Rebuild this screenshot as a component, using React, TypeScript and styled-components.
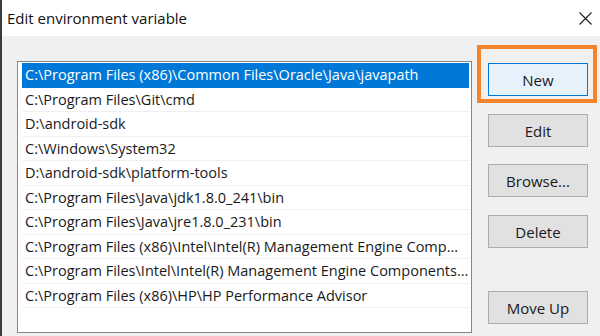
import styled, { createGlobalStyle } from "styled-components";

const GlobalStyle = createGlobalStyle`
  html, body {
    margin: 0;
    padding: 0;
    width: 600px;
    height: 336px;
    overflow: hidden;
    background: #f0f0f0;
  }
  body {
    font-family: "Open Sans", "Noto Sans", sans-serif;
  }
`;

const paths = [
  "C:\\Program Files (x86)\\Common Files\\Oracle\\Java\\javapath",
  "C:\\Program Files\\Git\\cmd",
  "D:\\android-sdk",
  "C:\\Windows\\System32",
  "D:\\android-sdk\\platform-tools",
  "C:\\Program Files\\Java\\jdk1.8.0_241\\bin",
  "C:\\Program Files\\Java\\jre1.8.0_231\\bin",
  "C:\\Program Files (x86)\\Intel\\Intel(R) Management Engine Comp...",
  "C:\\Program Files\\Intel\\Intel(R) Management Engine Components...",
  "C:\\Program Files (x86)\\HP\\HP Performance Advisor",
];

function App() {
  return (
    <>
      <GlobalStyle />
      <Window>
        <TitleBar>
          <Title>Edit environment variable</Title>
          <CloseButton>
            <svg width="13" height="13" viewBox="0 0 13 13">
              <path d="M0.5 0.5 L12.5 12.5 M12.5 0.5 L0.5 12.5" stroke="#222" strokeWidth="1.2" />
            </svg>
          </CloseButton>
        </TitleBar>
        <Body>
          <PathList>
            {paths.map((p, i) => (
              <PathRow key={p} selected={i === 0}>
                <span>{p}</span>
              </PathRow>
            ))}
          </PathList>
          <ButtonColumn>
            <Highlight>
              <ActionButton primary>New</ActionButton>
            </Highlight>
            <ActionButton gap={18}>Edit</ActionButton>
            <ActionButton gap={17}>Browse...</ActionButton>
            <ActionButton gap={18}>Delete</ActionButton>
            <ActionButton gap={43}>Move Up</ActionButton>
          </ButtonColumn>
        </Body>
      </Window>
    </>
  );
}

const Window = styled.div`
  width: 600px;
  height: 336px;
  box-sizing: border-box;
  border-left: 2px solid #3c3c3c;
  background: #f0f0f0;
  display: flex;
  flex-direction: column;
`;

const TitleBar = styled.div`
  height: 36px;
  flex-shrink: 0;
  background: #ffffff;
  display: flex;
  align-items: center;
  justify-content: space-between;
  padding: 0 3px 0 5px;
`;

const Title = styled.div`
  font-size: 15px;
  color: #111;
`;

const CloseButton = styled.div`
  width: 24px;
  height: 24px;
  display: flex;
  align-items: center;
  justify-content: center;
`;

const Body = styled.div`
  flex: 1;
  display: flex;
  align-items: flex-start;
  padding-left: 15px;
`;

const PathList = styled.div`
  margin-top: 25px;
  width: 455px;
  height: 272px;
  box-sizing: border-box;
  border: 1px solid #828790;
  background: #ffffff;
  padding: 1px 2px 0 4px;
  overflow: hidden;
`;

const PathRow = styled.div<{ selected?: boolean }>`
  height: 24.5px;
  box-sizing: border-box;
  display: flex;
  align-items: center;
  padding-left: 3px;
  font-size: 14.5px;
  white-space: nowrap;
  overflow: hidden;
  color: ${(p) => (p.selected ? "#ffffff" : "#1a1a1a")};
  background: ${(p) => (p.selected ? "#0078d7" : "transparent")};
  border-bottom: 1px solid ${(p) => (p.selected ? "#0078d7" : "#f0f0f0")};
`;

const ButtonColumn = styled.div`
  margin-left: 16px;
  padding-top: 27px;
  display: flex;
  flex-direction: column;
`;

const Highlight = styled.div`
  position: relative;
  &::after {
    content: "";
    position: absolute;
    top: -18px;
    left: -11px;
    right: -9px;
    bottom: -7px;
    border: 4px solid #f5842b;
    pointer-events: none;
  }
`;

const ActionButton = styled.div<{ primary?: boolean; gap?: number }>`
  width: 100px;
  height: 33px;
  box-sizing: border-box;
  margin-top: ${(p) => p.gap ?? 0}px;
  display: flex;
  align-items: center;
  justify-content: center;
  font-size: 15px;
  color: #1a1a1a;
  background: ${(p) => (p.primary ? "#e5f1fb" : "#e1e1e1")};
  border: 1px solid ${(p) => (p.primary ? "#0078d7" : "#adadad")};
`;

export default App;
